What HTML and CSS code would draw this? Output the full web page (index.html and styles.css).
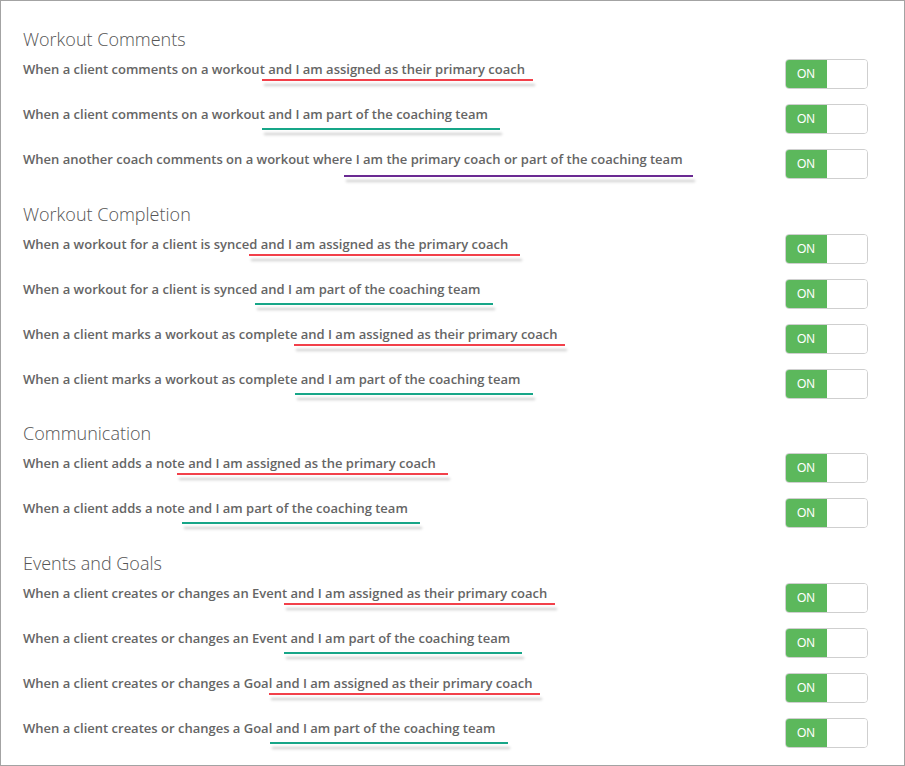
FILE: index.html
```html
<!DOCTYPE html>
<html lang="en">
<head>
<meta charset="utf-8">
<title>Notification Settings</title>
<link rel="stylesheet" href="styles.css">
</head>
<body>
<div class="panel">
  <section class="group first">
    <h2 class="group-title">Workout Comments</h2>
    <div class="row"><span class="label">When a client comments on a workout <span class="ul red">and I am assigned as their primary coach</span></span><div class="toggle"><span class="on">ON</span><span class="off"></span></div></div>
    <div class="row"><span class="label">When a client comments on a workout <span class="ul green">and I am part of the coaching team</span></span><div class="toggle"><span class="on">ON</span><span class="off"></span></div></div>
    <div class="row"><span class="label">When another coach comments on a workout where <span class="ul purple">I am the primary coach or part of the coaching team</span></span><div class="toggle"><span class="on">ON</span><span class="off"></span></div></div>
  </section>
  <section class="group">
    <h2 class="group-title">Workout Completion</h2>
    <div class="row"><span class="label">When a workout for a client is synced <span class="ul red">and I am assigned as the primary coach</span></span><div class="toggle"><span class="on">ON</span><span class="off"></span></div></div>
    <div class="row"><span class="label">When a workout for a client is synced <span class="ul green">and I am part of the coaching team</span></span><div class="toggle"><span class="on">ON</span><span class="off"></span></div></div>
    <div class="row"><span class="label">When a client marks a workout as complete <span class="ul red">and I am assigned as their primary coach</span></span><div class="toggle"><span class="on">ON</span><span class="off"></span></div></div>
    <div class="row"><span class="label">When a client marks a workout as complete <span class="ul green">and I am part of the coaching team</span></span><div class="toggle"><span class="on">ON</span><span class="off"></span></div></div>
  </section>
  <section class="group">
    <h2 class="group-title">Communication</h2>
    <div class="row"><span class="label">When a client adds a note <span class="ul red">and I am assigned as the primary coach</span></span><div class="toggle"><span class="on">ON</span><span class="off"></span></div></div>
    <div class="row"><span class="label">When a client adds a note <span class="ul green">and I am part of the coaching team</span></span><div class="toggle"><span class="on">ON</span><span class="off"></span></div></div>
  </section>
  <section class="group">
    <h2 class="group-title">Events and Goals</h2>
    <div class="row"><span class="label">When a client creates or changes an Event <span class="ul red">and I am assigned as their primary coach</span></span><div class="toggle"><span class="on">ON</span><span class="off"></span></div></div>
    <div class="row"><span class="label">When a client creates or changes an Event <span class="ul green">and I am part of the coaching team</span></span><div class="toggle"><span class="on">ON</span><span class="off"></span></div></div>
    <div class="row"><span class="label">When a client creates or changes a Goal <span class="ul red">and I am assigned as their primary coach</span></span><div class="toggle"><span class="on">ON</span><span class="off"></span></div></div>
    <div class="row"><span class="label">When a client creates or changes a Goal <span class="ul green">and I am part of the coaching team</span></span><div class="toggle"><span class="on">ON</span><span class="off"></span></div></div>
  </section>
</div>
</body>
</html>
```
FILE: styles.css
```css
* { box-sizing: border-box; }
html, body { margin: 0; padding: 0; background: #fff; }
body { font-family: "Open Sans", "Noto Sans", sans-serif; }

.panel {
  width: 905px;
  height: 766px;
  border: 1px solid #a3a3a3;
  padding: 27px 36px 0 22px;
  overflow: hidden;
}

.group { margin-top: 16.7px; }
.group.first { margin-top: 0; }

.group-title {
  margin: 0;
  font-size: 18px;
  line-height: 23px;
  font-weight: 300;
  color: #555;
}

.row {
  display: flex;
  align-items: flex-start;
  height: 45px;
  padding-top: 8px;
}

.label {
  font-size: 13px;
  line-height: 20px;
  font-weight: 600;
  color: #656565;
  white-space: nowrap;
}

.ul {
  position: relative;
  display: inline-block;
}
.ul::after {
  content: "";
  position: absolute;
  height: 2px;
  left: 50%;
  box-shadow: 2px 5px 3px rgba(0, 0, 0, 0.22);
}
.ul.red::after {
  top: 20px;
  width: 271px;
  margin-left: -135px;
  background: #f2404a;
}
.ul.green::after {
  top: 24px;
  width: 238px;
  margin-left: -116px;
  background: #17a688;
}
.ul.purple::after {
  top: 26px;
  left: -12px;
  width: 349px;
  background: #6a2a92;
}

.toggle {
  margin-left: auto;
  display: flex;
  width: 83px;
  height: 30px;
  border: 1px solid #cfcfcf;
  border-radius: 4px;
  overflow: hidden;
  font-family: "Liberation Sans", Arial, sans-serif;
}
.toggle .on {
  width: 42px;
  margin: -1px 0 -1px -1px;
  background: #5cb85c;
  color: #fff;
  font-size: 12px;
  line-height: 30px;
  text-align: center;
  border-radius: 4px 0 0 4px;
}
.toggle .off {
  flex: 1;
  background: #fff;
}
```
